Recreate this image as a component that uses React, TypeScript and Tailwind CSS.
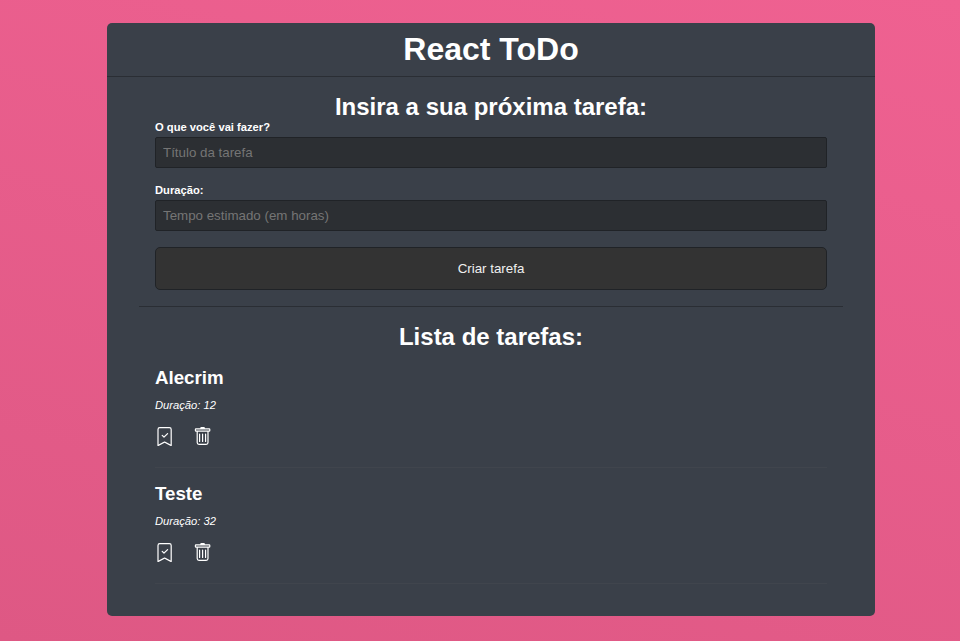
import React from "react";
import { BsBookmarkCheck, BsTrash } from "react-icons/bs";

const todos = [
  { id: 1, title: "Alecrim", time: 12 },
  { id: 2, title: "Teste", time: 32 },
];

function Field({ label, name, placeholder }: { label: string; name: string; placeholder: string }) {
  return (
    <div className="mb-4 flex flex-col">
      <label htmlFor={name} className="mb-[3px] h-[13px] text-[11.2px] leading-[13px] font-bold">
        {label}
      </label>
      <input
        id={name}
        type="text"
        placeholder={placeholder}
        className="h-[31px] w-full rounded-[2px] border border-[#202327] bg-[#2c2f33] px-[7px] text-[13.333px] outline-none placeholder:text-[#757575]"
      />
    </div>
  );
}

function Todo({ title, time }: { title: string; time: number }) {
  return (
    <div className="h-[116px] border-b border-[#40454d]">
      <h3 className="pt-[15px] text-[18.72px] leading-[22px] font-bold">{title}</h3>
      <p className="mt-[9px] text-[11.2px] leading-[14px] italic">Duração: {time}</p>
      <div className="mt-[15px] flex gap-[19px] text-white">
        <BsBookmarkCheck size={19.2} />
        <BsTrash size={19.2} />
      </div>
    </div>
  );
}

export default function App() {
  return (
    <div className="h-[641px] overflow-hidden bg-[linear-gradient(15deg,#de5884_0%,#ef6191_100%)] pt-[23px] pl-[107px] font-['Liberation_Sans',Arial,sans-serif] text-white">
      <div className="h-[593px] w-[768px] rounded-[5px] bg-[#3a4049]">
        <header className="h-[54px] border-b border-[#2a2e34] pt-2 text-center">
          <h1 className="text-[32px] leading-[36px] font-bold">React ToDo</h1>
        </header>
        <section className="mx-8 h-[230px] border-b border-[#2a2e34] px-4 pt-4">
          <h2 className="mb-[1px] text-center text-2xl leading-[27px] font-bold">Insira a sua próxima tarefa:</h2>
          <form>
            <Field label="O que você vai fazer?" name="title" placeholder="Título da tarefa" />
            <Field label="Duração:" name="time" placeholder="Tempo estimado (em horas)" />
            <button
              type="button"
              className="h-[43px] w-full rounded-[5px] border border-[#202327] bg-[#333333] text-[13.333px] text-[#f0f0f0]"
            >
              Criar tarefa
            </button>
          </form>
        </section>
        <section className="mx-12 pt-4">
          <h2 className="mb-[2px] text-center text-2xl leading-[27px] font-bold">Lista de tarefas:</h2>
          {todos.map((todo) => (
            <Todo key={todo.id} title={todo.title} time={todo.time} />
          ))}
        </section>
      </div>
    </div>
  );
}
